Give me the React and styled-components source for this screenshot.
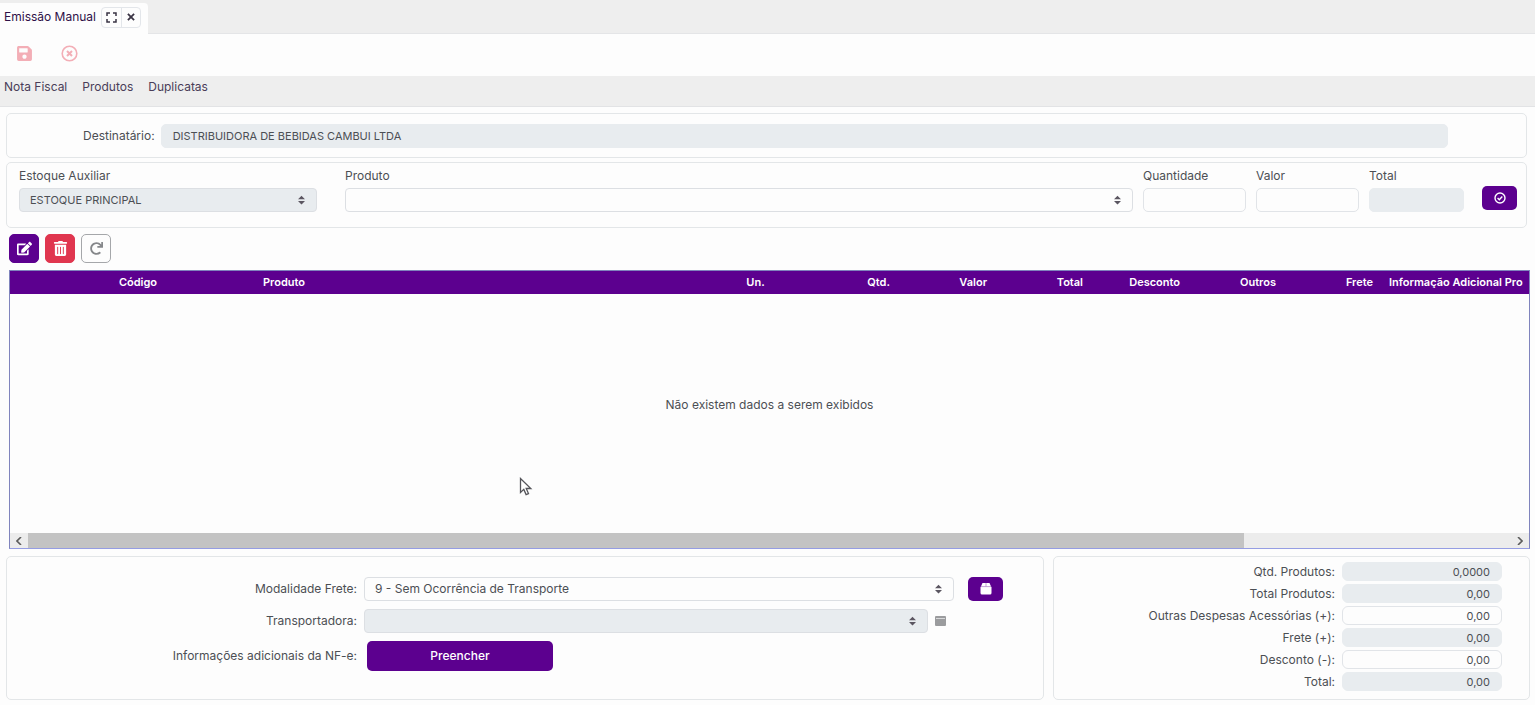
import React from 'react';
import styled, { createGlobalStyle } from 'styled-components';
import { FaSave, FaTrashAlt, FaEdit, FaRedo } from 'react-icons/fa';

const GlobalStyle = createGlobalStyle`
  * {
    box-sizing: border-box;
  }

  body {
    background-color: #fdfdfd;
    color: #4c4f54;
    font-family: Inter, 'Liberation Sans', sans-serif;
    font-size: 12px;
    line-height: 16px;
    margin: 0;
  }

  button,
  input,
  select {
    color: inherit;
    font: inherit;
    margin: 0;
  }
`;

const Page = styled.div`
  display: flex;
  flex-direction: column;
  min-height: 100vh;
  position: relative;
`;

const TabBar = styled.div`
  background-color: #eee;
  border-bottom: 1px solid #e4e5e7;
  display: flex;
  height: 34px;
  padding-top: 3px;
`;

const Tab = styled.div`
  align-items: center;
  background-color: #fdfdfd;
  border-radius: 0 4px 0 0;
  color: #2f1148;
  display: flex;
  gap: 5px;
  margin-bottom: -1px;
  padding: 0 7px 3px 4px;
`;

const TabActions = styled.div`
  border: 1px solid #e3e6ea;
  border-radius: 4px;
  display: flex;
`;

const TabButton = styled.button`
  align-items: center;
  background: none;
  border: 0;
  color: #3a3444;
  display: flex;
  height: 19px;
  justify-content: center;
  padding: 0;
  width: 19px;

  & + & {
    border-left: 1px solid #e3e6ea;
  }
`;

const ActionBar = styled.div`
  align-items: center;
  display: flex;
  gap: 28px;
  height: 42px;
  padding: 0 16px 4px;
`;

const IconButton = styled.button`
  background: none;
  border: 0;
  color: #f3aeb6;
  display: flex;
  padding: 0;
`;

const Menu = styled.nav`
  background-color: #eee;
  border-bottom: 1px solid #e2e3e5;
  display: flex;
  gap: 15px;
  height: 31px;
  padding: 3px 4px 0;

  & > a {
    color: #4a3d58;
    text-decoration: none;
  }
`;

const Content = styled.main`
  display: flex;
  flex: 1;
  flex-direction: column;
  padding: 6px 5px 5px 6px;
`;

const Panel = styled.section`
  border: 1px solid #e3e6e8;
  border-radius: 5px;
`;

const RecipientPanel = styled(Panel)`
  align-items: center;
  display: flex;
  gap: 6px;
  height: 45px;
  margin: 0 3px 4px 0;
  padding: 0 78px 0 76px;
`;

const ProductPanel = styled(Panel)`
  display: grid;
  gap: 10px;
  grid-template-columns: 298px minmax(0, 1fr) 103px 103px 95px 43px;
  height: 66px;
  margin-right: 3px;
  padding: 5px 9px 0 12px;
`;

const Field = styled.div`
  display: flex;
  flex-direction: column;
  gap: 4px;
  margin-left: ${({ $indent }) => $indent || '0'};
`;

const Input = styled.input`
  background-color: ${({ readOnly }) => (readOnly ? '#e8ecef' : '#fdfdfd')};
  border: 1px solid ${({ readOnly }) => (readOnly ? '#e8ecef' : '#e1e4e8')};
  border-radius: 5px;
  font-size: ${({ $small }) => ($small ? '11px' : '12px')};
  height: 24px;
  min-width: 0;
  outline: 0;
  padding: 0 11px;
  width: 100%;
`;

const SelectBox = styled.div`
  flex: ${({ $fill }) => ($fill ? '1' : 'none')};
  position: relative;

  & > select {
    appearance: none;
    background-color: #fdfdfd;
    border: 1px solid #dcdfe3;
    border-radius: 4px;
    display: block;
    font-size: ${({ $small }) => ($small ? '11px' : '12px')};
    height: 24px;
    opacity: 1;
    outline: 0;
    padding: 0 30px 0 10px;
    width: 100%;
  }

  & > select:disabled {
    background-color: #e8ecef;
    color: #4c4f54;
  }

  & > svg {
    pointer-events: none;
    position: absolute;
    right: 12px;
    top: 7px;
  }
`;

const PurpleButton = styled.button`
  align-items: center;
  background-color: #5c008f;
  border: 0;
  border-radius: 5px;
  color: #fff;
  display: flex;
  font-size: 12px;
  font-weight: 500;
  height: ${({ $height }) => $height || '24px'};
  justify-content: center;
  padding: 0;
  width: ${({ $width }) => $width || '35px'};
`;

const ConfirmButton = styled(PurpleButton)`
  justify-self: end;
  margin-top: 18px;
`;

const GridTools = styled.div`
  display: flex;
  gap: 6px;
  padding: 6px 3px 7px 3px;
`;

const ToolButton = styled.button`
  align-items: center;
  background-color: ${({ $color }) => $color || '#fdfdfd'};
  border: 1px solid ${({ $color }) => $color || '#a5a7aa'};
  border-radius: 5px;
  color: ${({ $color }) => ($color ? '#fff' : '#85878a')};
  display: flex;
  height: 29px;
  justify-content: center;
  padding: 0;
  width: 30px;
`;

const GridBox = styled.div`
  border: 1px solid #8084bd;
  border-bottom-color: #959de3;
  display: flex;
  flex: 1;
  flex-direction: column;
  margin: 0 0 7px 3px;
  min-height: 200px;
`;

const TableClip = styled.div`
  overflow: hidden;
`;

const Table = styled.table`
  border-collapse: collapse;
  table-layout: fixed;
  width: 1848px;
`;

const HeaderCell = styled.th`
  background-color: #5c008f;
  color: #fff;
  font-size: 11px;
  font-weight: 600;
  height: 23px;
  padding: 0 8px 2px;
  text-align: ${({ $align }) => $align || 'right'};
  white-space: nowrap;
  width: ${({ $width }) => $width || '97px'};

  &:empty {
    padding: 0;
  }
`;

const Empty = styled.div`
  align-items: center;
  display: flex;
  flex: 1;
  justify-content: center;
  padding-bottom: 18px;
`;

const ScrollBar = styled.div`
  background-color: #ececec;
  display: flex;
  height: 15px;
  justify-content: space-between;
`;

const ScrollButton = styled.button`
  align-items: center;
  background: none;
  border: 0;
  color: #5b5b5b;
  display: flex;
  justify-content: center;
  padding: 0;
  width: 18px;
`;

const ScrollTrack = styled.div`
  flex: 1;
`;

const ScrollThumb = styled.div`
  background-color: #c3c3c3;
  height: 15px;
  width: 82%;
`;

const Footer = styled.div`
  display: grid;
  gap: 9px;
  grid-template-columns: minmax(0, 1038fr) minmax(0, 477fr);
`;

const FreightPanel = styled(Panel)`
  display: flex;
  flex-direction: column;
  gap: 8px;
  height: 144px;
  padding: 20px 40px 0 0;
`;

const FreightRow = styled.div`
  align-items: center;
  display: grid;
  gap: 7px;
  grid-template-columns: 350px minmax(0, 1fr);

  & > label,
  & > span {
    text-align: right;
  }
`;

const FreightControl = styled.div`
  align-items: center;
  display: flex;
  gap: ${({ $gap }) => $gap || '0'};
  padding-left: ${({ $indent }) => $indent || '0'};
  padding-right: ${({ $end }) => $end || '0'};
`;

const TotalsPanel = styled(Panel)`
  display: flex;
  flex-direction: column;
  gap: 3px;
  padding: 5px 27px 0;
`;

const TotalRow = styled.div`
  align-items: center;
  display: flex;
  gap: 7px;
  justify-content: flex-end;

  & > input {
    border-radius: 6px;
    height: 19px;
    text-align: right;
    width: 160px;
  }
`;

const Pointer = styled.svg`
  left: 519px;
  pointer-events: none;
  position: absolute;
  top: 477px;
`;

function SortArrows() {
  return (
    <svg width="7" height="10" viewBox="0 0 8 10" fill="#5b5661" aria-hidden="true">
      <path d="M4 0 0 4h8zM4 10 0 6h8z" />
    </svg>
  );
}

function Select({ children, $small, $fill, ...props }) {
  return (
    <SelectBox $small={$small} $fill={$fill}>
      <select {...props}>{children}</select>
      <SortArrows />
    </SelectBox>
  );
}

function CalendarIcon() {
  return (
    <svg width="12" height="12" viewBox="0 0 12 12" aria-hidden="true">
      <path d="M2.5 0h7L11 3.5H1z" fill="#fff" />
      <rect x="0.5" y="3" width="11" height="8.5" rx="1.5" fill="#fff" />
      <path d="M1 3.6h10M6 0v3.6" stroke="#b48ccc" strokeWidth="0.8" />
    </svg>
  );
}

const COLUMNS = [
  { name: '', width: '11px' },
  { name: 'Código', width: '234px', align: 'center' },
  { name: 'Produto', width: '455px', align: 'left' },
  { name: 'Un.', width: '91px', align: 'center' },
  { name: 'Qtd.' },
  { name: 'Valor' },
  { name: 'Total', width: '96px' },
  { name: 'Desconto' },
  { name: 'Outros', width: '96px' },
  { name: 'Frete' },
  { name: 'Informação Adicional Pro', width: '477px', align: 'left' }
];

const TOTALS = [
  { id: 'qtd', label: 'Qtd. Produtos:', value: '0,0000', readOnly: true },
  { id: 'produtos', label: 'Total Produtos:', value: '0,00', readOnly: true },
  { id: 'despesas', label: 'Outras Despesas Acessórias (+):', value: '0,00' },
  { id: 'frete', label: 'Frete (+):', value: '0,00', readOnly: true },
  { id: 'desconto', label: 'Desconto (-):', value: '0,00' },
  { id: 'total', label: 'Total:', value: '0,00', readOnly: true }
];

function App() {
  return (
    <Page>
      <GlobalStyle />
      <TabBar>
        <Tab>
          Emissão Manual
          <TabActions>
            <TabButton aria-label="Expandir">
              <svg width="11" height="11" viewBox="0 0 11 11" fill="none" stroke="currentColor" strokeWidth="1.5">
                <path d="M1 4V1h3M7 1h3v3M10 7v3H7M4 10H1V7" />
              </svg>
            </TabButton>
            <TabButton aria-label="Fechar">
              <svg width="8" height="8" viewBox="0 0 9 9" stroke="currentColor" strokeWidth="2">
                <path d="m1 1 7 7M8 1 1 8" />
              </svg>
            </TabButton>
          </TabActions>
        </Tab>
      </TabBar>

      <ActionBar>
        <IconButton aria-label="Salvar">
          <FaSave size={17} />
        </IconButton>
        <IconButton aria-label="Cancelar">
          <svg width="17" height="17" viewBox="0 0 17 17" fill="none" stroke="currentColor" strokeWidth="1.6">
            <circle cx="8.5" cy="8.5" r="7.3" />
            <path d="m6 6 5 5M11 6l-5 5" strokeWidth="2" />
          </svg>
        </IconButton>
      </ActionBar>

      <Menu>
        <a href="#nota-fiscal">Nota Fiscal</a>
        <a href="#produtos">Produtos</a>
        <a href="#duplicatas">Duplicatas</a>
      </Menu>

      <Content>
        <RecipientPanel>
          <label htmlFor="destinatario">Destinatário:</label>
          <Input id="destinatario" $small readOnly defaultValue="DISTRIBUIDORA DE BEBIDAS CAMBUI LTDA" />
        </RecipientPanel>

        <ProductPanel>
          <Field>
            <label htmlFor="estoque">Estoque Auxiliar</label>
            <Select id="estoque" $small disabled>
              <option>ESTOQUE PRINCIPAL</option>
            </Select>
          </Field>
          <Field $indent="18px">
            <label htmlFor="produto">Produto</label>
            <Select id="produto">
              <option> </option>
            </Select>
          </Field>
          <Field>
            <label htmlFor="quantidade">Quantidade</label>
            <Input id="quantidade" />
          </Field>
          <Field>
            <label htmlFor="valor">Valor</label>
            <Input id="valor" />
          </Field>
          <Field>
            <label htmlFor="total-item">Total</label>
            <Input id="total-item" readOnly />
          </Field>
          <ConfirmButton aria-label="Confirmar">
            <svg width="12" height="12" viewBox="0 0 12 12" fill="none" stroke="currentColor" strokeWidth="1.4">
              <circle cx="6" cy="6" r="5" />
              <path d="m3.6 6.1 1.7 1.6 3-3.2" />
            </svg>
          </ConfirmButton>
        </ProductPanel>

        <GridTools>
          <ToolButton $color="#5c008f" aria-label="Editar">
            <FaEdit size={15} />
          </ToolButton>
          <ToolButton $color="#e0364f" aria-label="Excluir">
            <FaTrashAlt size={15} />
          </ToolButton>
          <ToolButton aria-label="Atualizar">
            <FaRedo size={13} />
          </ToolButton>
        </GridTools>

        <GridBox>
          <TableClip>
            <Table>
              <thead>
                <tr>
                  {COLUMNS.map(column => (
                    <HeaderCell key={column.name} $width={column.width} $align={column.align}>
                      {column.name}
                    </HeaderCell>
                  ))}
                </tr>
              </thead>
            </Table>
          </TableClip>
          <Empty>Não existem dados a serem exibidos</Empty>
          <ScrollBar>
            <ScrollButton aria-label="Rolar para a esquerda">
              <svg width="6" height="8" viewBox="0 0 6 8" fill="none" stroke="currentColor" strokeWidth="1.6">
                <path d="M5 0 1 4l4 4" />
              </svg>
            </ScrollButton>
            <ScrollTrack>
              <ScrollThumb />
            </ScrollTrack>
            <ScrollButton aria-label="Rolar para a direita">
              <svg width="6" height="8" viewBox="0 0 6 8" fill="none" stroke="currentColor" strokeWidth="1.6">
                <path d="m1 0 4 4-4 4" />
              </svg>
            </ScrollButton>
          </ScrollBar>
        </GridBox>

        <Footer>
          <FreightPanel>
            <FreightRow>
              <label htmlFor="modalidade">Modalidade Frete:</label>
              <FreightControl $gap="14px">
                <Select id="modalidade" $fill>
                  <option>9 - Sem Ocorrência de Transporte</option>
                </Select>
                <PurpleButton aria-label="Agenda">
                  <CalendarIcon />
                </PurpleButton>
              </FreightControl>
            </FreightRow>
            <FreightRow>
              <label htmlFor="transportadora">Transportadora:</label>
              <FreightControl $gap="7px" $end="57px">
                <Select id="transportadora" $fill disabled>
                  <option> </option>
                </Select>
                <svg width="11" height="10" viewBox="0 0 11 10" aria-hidden="true">
                  <rect width="11" height="10" rx="1" fill="#9b9c9e" />
                  <path d="M1 2.5h9" stroke="#d8d9da" />
                </svg>
              </FreightControl>
            </FreightRow>
            <FreightRow>
              <span>Informações adicionais da NF-e:</span>
              <FreightControl $indent="3px">
                <PurpleButton $width="186px" $height="30px">
                  Preencher
                </PurpleButton>
              </FreightControl>
            </FreightRow>
          </FreightPanel>

          <TotalsPanel>
            {TOTALS.map(item => (
              <TotalRow key={item.id}>
                <label htmlFor={`total-${item.id}`}>{item.label}</label>
                <Input id={`total-${item.id}`} $small readOnly={item.readOnly} defaultValue={item.value} />
              </TotalRow>
            ))}
          </TotalsPanel>
        </Footer>
      </Content>

      <Pointer width="14" height="20" viewBox="0 0 14 20" fill="#fff" stroke="#55555a" strokeWidth="1.3">
        <path d="M1.5 1.5v14l3.3-3.1 2.3 5.2 2.4-1-2.3-5.1h4.6z" />
      </Pointer>
    </Page>
  );
}

export default App;
